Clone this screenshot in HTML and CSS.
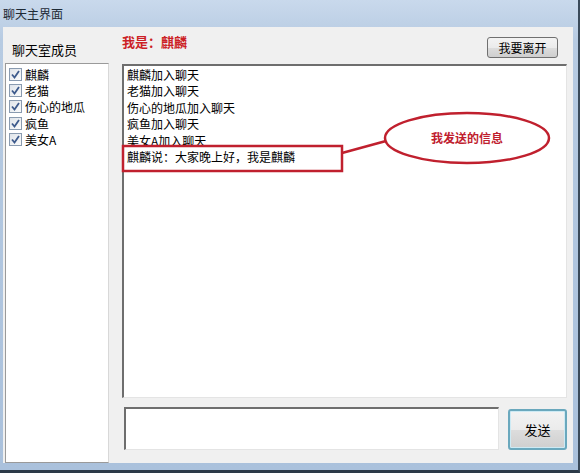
FILE: index.html
```
<!DOCTYPE html>
<html lang="zh-CN">
<head>
    <meta charset="UTF-8">
    <title>聊天主界面</title>
    <link rel="stylesheet" href="styles.css">
</head>
<body>
    <div class="window">
        <div class="titlebar">聊天主界面</div>
        <div class="client">
            <!-- members -->
            <div class="side">
                <div class="side-label">聊天室成员</div>
                <ul class="members">
                    <li><span class="check"><svg width="9" height="9" viewBox="0 0 9 9"><path d="M1,4.5 L3.5,7.5 L8,1" class="tick"/></svg></span>麒麟</li>
                    <li><span class="check"><svg width="9" height="9" viewBox="0 0 9 9"><path d="M1,4.5 L3.5,7.5 L8,1" class="tick"/></svg></span>老猫</li>
                    <li><span class="check"><svg width="9" height="9" viewBox="0 0 9 9"><path d="M1,4.5 L3.5,7.5 L8,1" class="tick"/></svg></span>伤心的地瓜</li>
                    <li><span class="check"><svg width="9" height="9" viewBox="0 0 9 9"><path d="M1,4.5 L3.5,7.5 L8,1" class="tick"/></svg></span>疯鱼</li>
                    <li><span class="check"><svg width="9" height="9" viewBox="0 0 9 9"><path d="M1,4.5 L3.5,7.5 L8,1" class="tick"/></svg></span>美女A</li>
                </ul>
            </div>

            <!-- chat -->
            <div class="main">
                <div class="head">
                    <div class="me">我是：麒麟</div>
                    <button class="btn leave">我要离开</button>
                </div>
                <div class="log">
                    <div>麒麟加入聊天</div>
                    <div>老猫加入聊天</div>
                    <div>伤心的地瓜加入聊天</div>
                    <div>疯鱼加入聊天</div>
                    <div>美女A加入聊天</div>
                    <div>麒麟说：大家晚上好，我是麒麟</div>
                </div>
                <div class="compose">
                    <div class="input"></div>
                    <button class="btn send">发送</button>
                </div>
            </div>
        </div>
    </div>

    <!-- annotation -->
    <svg class="note" width="585" height="476">
        <rect x="123" y="146" width="219" height="25" class="note-line"/>
        <path d="M342,153 L386,141" class="note-line"/>
        <ellipse cx="467" cy="138" rx="82" ry="25" class="note-line"/>
        <text x="467" y="140" class="note-text">我发送的信息</text>
    </svg>
</body>
</html>
```

FILE: styles.css
```
body {
    margin: 0;
    background: #ffffff;
    font-family: "Noto Sans CJK SC", "Liberation Sans", sans-serif;
    font-size: 12px;
    color: #000;
    position: relative;
    width: 585px;
    height: 476px;
    overflow: hidden;
}
.window {
    width: 578px;
    height: 470px;
    background: linear-gradient(to bottom, #c9d9ec, #b7cbe2 40px, #aac1dc);
    border-right: 2px solid #3a4a5a;
    border-bottom: 3px solid #2c3a48;
}
.titlebar {
    height: 27px;
    line-height: 27px;
    padding-left: 3px;
    font-size: 12px;
    color: #1e2a36;
}
.client {
    margin-left: 3px;
    width: 570px;
    height: 436px;
    background: #f0f0f0;
    display: flex;
    gap: 13px;
}
.side {
    width: 104px;
    margin-left: 2px;
    display: flex;
    flex-direction: column;
}
.side-label {
    height: 36px;
    padding: 10px 0 0 7px;
    box-sizing: border-box;
    line-height: 26px;
    font-size: 13px;
}
.members {
    flex: 1;
    margin: 0;
    padding: 2px 0 0 3px;
    list-style: none;
    background: #fff;
    border: 1px solid #9a9a9a;
    border-right-color: #d8d8d8;
}
.members li {
    height: 16.4px;
    display: flex;
    align-items: center;
    gap: 3px;
    white-space: nowrap;
}
.check {
    width: 11px;
    height: 11px;
    border: 1px solid #8a9bb0;
    background: linear-gradient(135deg, #dfe4ea, #fbfbfb);
    display: flex;
    align-items: center;
    justify-content: center;
}
.tick {
    fill: none;
    stroke: #3d5a8c;
    stroke-width: 1.8;
}
.main {
    flex: 1;
    display: flex;
    flex-direction: column;
    padding-right: 6px;
}
.head {
    height: 37px;
    display: flex;
    justify-content: space-between;
    align-items: flex-start;
}
.me {
    margin-top: 7px;
    line-height: 16px;
    font-size: 13px;
    font-weight: bold;
    color: #cc1f26;
}
.btn {
    font-family: "Noto Sans CJK SC", "Liberation Sans", sans-serif;
    font-size: 12px;
    color: #000;
    padding: 0;
    border-radius: 3px;
    background: linear-gradient(to bottom, #f3f3f3, #ebebeb 50%, #dddddd 51%, #cfcfcf);
}
.leave {
    margin-top: 10px;
    margin-right: 9px;
    width: 71px;
    height: 21px;
    border: 1px solid #707070;
}
.log {
    height: 334px;
    box-sizing: border-box;
    background: #fff;
    border-top: 2px solid #6e6e6e;
    border-left: 2px solid #6e6e6e;
    border-right: 1px solid #e4e4e4;
    border-bottom: 1px solid #e4e4e4;
    padding: 1px 0 0 3px;
    line-height: 16.4px;
}
.compose {
    display: flex;
    align-items: flex-start;
    gap: 9px;
    margin-top: 9px;
}
.input {
    margin-left: 2px;
    width: 375px;
    height: 43px;
    box-sizing: border-box;
    background: #fff;
    border-top: 2px solid #6e6e6e;
    border-left: 2px solid #6e6e6e;
    border-right: 1px solid #e4e4e4;
    border-bottom: 1px solid #e4e4e4;
}
.send {
    margin-top: 2px;
    width: 59px;
    height: 41px;
    border: 2px solid #6aa8bd;
    box-shadow: inset 0 0 0 1px #cdeaf4;
    font-size: 13px;
}
.note {
    position: absolute;
    left: 0;
    top: 0;
    pointer-events: none;
}
.note-line {
    fill: none;
    stroke: #c0202e;
    stroke-width: 2.5;
}
.note-text {
    font-size: 12px;
    font-weight: bold;
    fill: #c0202e;
    text-anchor: middle;
    dominant-baseline: middle;
}
```
